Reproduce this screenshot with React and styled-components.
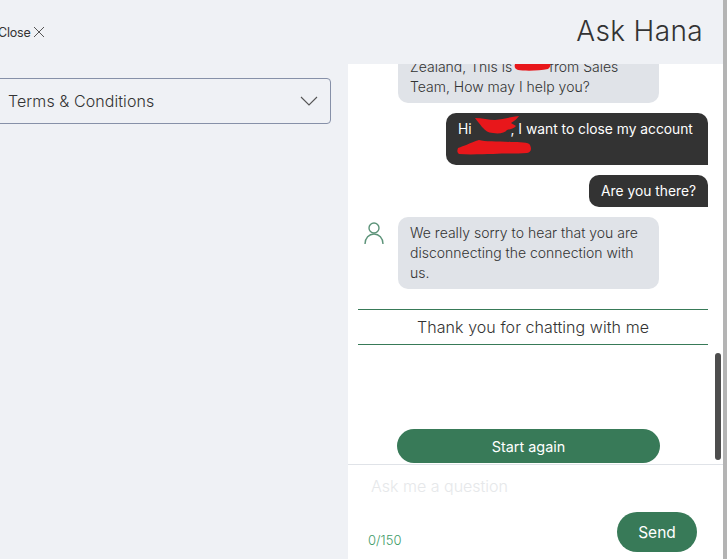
import React from 'react'
import styled, { createGlobalStyle } from 'styled-components'

const GlobalStyle = createGlobalStyle`
    html, body {
        margin: 0;
        padding: 0;
        height: 100%;
        overflow: hidden;
        background: #fff;
    }
    body {
        font-family: "Inter", "Liberation Sans", sans-serif;
        color: #333;
    }
`;

const Page = styled.div`
    width: 727px;
    height: 559px;
    display: flex;
    flex-direction: column;
    overflow: hidden;
    background: #fff;
    position: relative;
`;

const Header = styled.header`
    height: 64px;
    flex: none;
    display: flex;
    align-items: center;
    justify-content: space-between;
    background: #eff1f5;
    padding: 0 24px 0 0;
`;

const CloseButton = styled.button`
    display: flex;
    align-items: center;
    gap: 1px;
    margin-left: -2px;
    padding: 0;
    border: 0;
    background: none;
    font: inherit;
    font-size: 12.5px;
    letter-spacing: -0.2px;
    color: #333;
`;

const Title = styled.h1`
    margin: 0 0 2px;
    font-weight: 300;
    font-size: 28px;
    letter-spacing: 0.35px;
    color: #333;
`;

const Body = styled.div`
    flex: 1;
    min-height: 0;
    display: flex;
`;

const Side = styled.aside`
    width: 348px;
    flex: none;
    background: #eff1f5;
    padding: 14px 17px 0 0;
    box-sizing: border-box;
`;

const Accordion = styled.div`
    height: 46px;
    margin-left: -4px;
    box-sizing: border-box;
    display: flex;
    align-items: center;
    justify-content: space-between;
    padding: 0 12px 0 11px;
    border: 1px solid #8690a8;
    border-radius: 4px;
    font-size: 16px;
    font-weight: 300;
    letter-spacing: 0.08px;
    color: #333;
`;

const Chat = styled.section`
    flex: 1;
    min-width: 0;
    display: flex;
    flex-direction: column;
    position: relative;
`;

const Messages = styled.div`
    flex: 1;
    min-height: 0;
    overflow: hidden;
    display: flex;
    flex-direction: column;
    justify-content: flex-end;
    padding: 0 19px 1px 10px;
`;

const Row = styled.div`
    display: flex;
    flex: none;
    justify-content: ${(p) => (p.$mine ? 'flex-end' : 'flex-start')};
    margin-bottom: 10px;
    padding-left: ${(p) => (p.$mine ? '0' : '40px')};
    position: relative;
`;

const Bubble = styled.div`
    box-sizing: border-box;
    width: ${(p) => p.$width || 'auto'};
    padding: 6px 12px;
    border-radius: ${(p) => (p.$mine ? '10px 10px 0 10px' : '10px')};
    background: ${(p) => (p.$mine ? '#333' : '#e0e3e8')};
    color: ${(p) => (p.$mine ? '#fff' : '#333')};
    font-size: ${(p) => (p.$mine ? '13.8px' : '14px')};
    font-weight: ${(p) => (p.$mine ? 400 : 300)};
    line-height: 20px;
    white-space: ${(p) => (p.$mine ? 'nowrap' : 'normal')};
`;

const Avatar = styled.svg`
    position: absolute;
    left: 5px;
    top: 4px;
    width: 22px;
    height: 24px;
`;

const Scribble = styled.svg`
    position: absolute;
    overflow: visible;
    pointer-events: none;
`;

const Redacted = styled.span`
    position: relative;
    display: inline-block;
    width: ${(p) => p.$width};
    height: 1em;
    vertical-align: baseline;
`;

const Thanks = styled.div`
    flex: none;
    height: 36px;
    box-sizing: border-box;
    margin-top: 10px;
    display: flex;
    align-items: center;
    justify-content: center;
    border-top: 1px solid #387a58;
    border-bottom: 1px solid #387a58;
    font-size: 16px;
    font-weight: 300;
    letter-spacing: 0.07px;
    color: #333;
`;

const StartAgain = styled.button`
    flex: none;
    align-self: flex-start;
    width: 263px;
    height: 34px;
    margin: 84px 0 0 39px;
    border: 0;
    border-radius: 17px;
    background: #387a58;
    color: #fff;
    font: inherit;
    font-size: 14.4px;
    font-weight: 400;
`;

const Composer = styled.div`
    flex: none;
    height: 95px;
    box-sizing: border-box;
    border-top: 1px solid #e0e3e8;
    padding: 11px 30px 7px 20px;
    display: flex;
    flex-direction: column;
    justify-content: space-between;
`;

const Placeholder = styled.div`
    margin-left: 3px;
    font-size: 16px;
    font-weight: 300;
    color: #e6e8ea;
`;

const ComposerFoot = styled.div`
    display: flex;
    align-items: flex-end;
    justify-content: space-between;
`;

const Counter = styled.span`
    margin-bottom: 4px;
    font-size: 13px;
    font-weight: 300;
    color: #3f9c69;
`;

const SendButton = styled.button`
    width: 80px;
    height: 40px;
    border: 0;
    border-radius: 20px;
    background: #387a58;
    color: #fff;
    font: inherit;
    font-size: 15.5px;
    font-weight: 400;
`;

const ScrollThumb = styled.div`
    position: absolute;
    left: 367px;
    top: 289px;
    width: 6px;
    height: 107px;
    border-radius: 3px;
    background: #4d4d4d;
`;

const EdgeBar = styled.div`
    position: absolute;
    right: 0;
    top: 0;
    bottom: 0;
    width: 4px;
    background: #b4b4b4;
`;

const App = () => {
    return (
        <Page>
            <GlobalStyle />
            <Header>
                <CloseButton>
                    Close
                    <svg width="14" height="14" viewBox="0 0 14 14" fill="none" stroke="#555" strokeWidth="1">
                        <path d="M2 2l10 10M12 2L2 12" />
                    </svg>
                </CloseButton>
                <Title>Ask Hana</Title>
            </Header>
            <Body>
                <Side>
                    <Accordion>
                        Terms &amp; Conditions
                        <svg width="18" height="10" viewBox="0 0 18 10" fill="none" stroke="#555" strokeWidth="1.1">
                            <path d="M1 1l8 8 8-8" />
                        </svg>
                    </Accordion>
                </Side>
                <Chat>
                    <Messages>
                        <Row>
                            <Bubble $width="261px">
                                Zealand, This is{' '}
                                <Redacted $width="29px">
                                    <Scribble width="37" height="12" viewBox="0 0 37 12" style={{ left: -2, top: 2 }}>
                                        <path d="M1 4c6-3 27-4 34-3 2 2 2 6-1 8-9 2-24 2-30 1-3-1-4-3-3-6z" fill="#e8171b" />
                                    </Scribble>
                                </Redacted>{' '}
                                from Sales Team, How may I help you?
                            </Bubble>
                        </Row>
                        <Row $mine>
                            <Bubble $mine $width="262px">
                                Hi{' '}
                                <Redacted $width="35px">
                                    <Scribble width="46" height="18" viewBox="0 0 46 18" style={{ left: -2, top: -4 }}>
                                        <path d="M1 2c7 0 14 2 20 2 8-1 16-3 24-4-2 3-5 5-8 7l5 3c-2 3-6 3-9 4-2 3-8 4-14 3-5 0-8-3-11-6C6 8 3 5 1 2z" fill="#e8171b" />
                                    </Scribble>
                                </Redacted>
                                , I want to close my account
                                <br />
                                <Redacted $width="72px">
                                    <Scribble width="76" height="16" viewBox="0 0 76 16" style={{ left: -1, top: -1 }}>
                                        <path d="M1 9c6-2 12-5 21-8 6 2 18 1 32 2 8 0 18 0 19 3 2 4 1 7-3 8-12 1-22 0-34 1-10 0-22 1-34 0-2-2-2-3-1-6z" fill="#e8171b" />
                                    </Scribble>
                                </Redacted>
                            </Bubble>
                        </Row>
                        <Row $mine>
                            <Bubble $mine>Are you there?</Bubble>
                        </Row>
                        <Row>
                            <Avatar viewBox="0 0 22 24" fill="none" stroke="#5c9379" strokeWidth="1.4">
                                <circle cx="11" cy="7" r="5" />
                                <path d="M2 23c0-6 4-10 9-10s9 4 9 10" />
                            </Avatar>
                            <Bubble $width="261px">
                                We really sorry to hear that you are disconnecting the connection with us.
                            </Bubble>
                        </Row>
                        <Thanks>Thank you for chatting with me</Thanks>
                        <StartAgain>Start again</StartAgain>
                    </Messages>
                    <ScrollThumb />
                    <Composer>
                        <Placeholder>Ask me a question</Placeholder>
                        <ComposerFoot>
                            <Counter>0/150</Counter>
                            <SendButton>Send</SendButton>
                        </ComposerFoot>
                    </Composer>
                </Chat>
            </Body>
            <EdgeBar />
        </Page>
    )
}

export default App
